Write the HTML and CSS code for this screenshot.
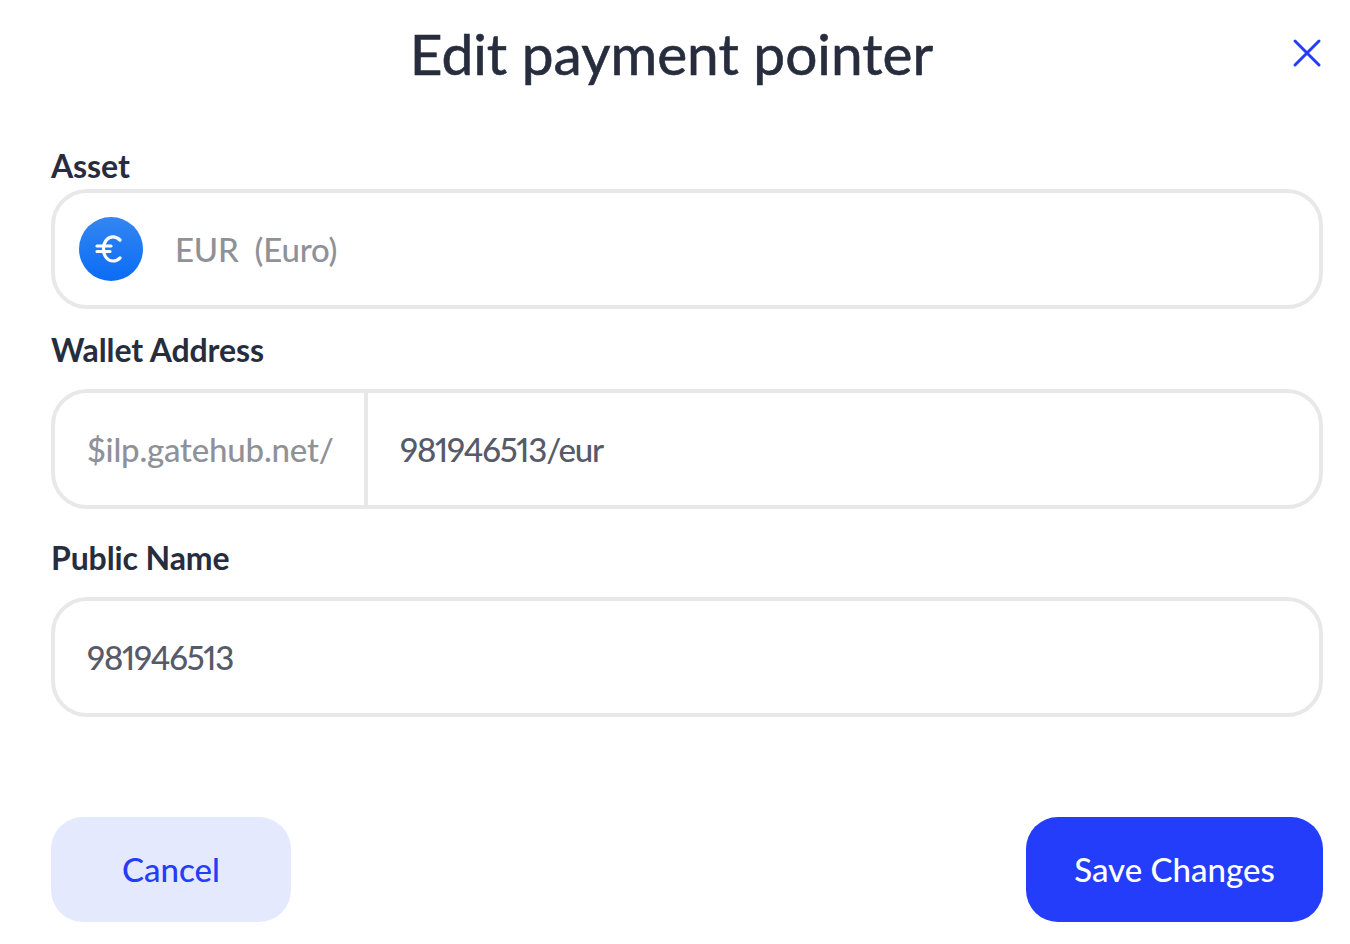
FILE: index.html
```html
<!DOCTYPE html>
<html lang="en">
<head>
    <meta charset="UTF-8">
    <meta name="viewport" content="width=device-width, initial-scale=1.0">
    <title>Edit payment pointer</title>
    <link rel="stylesheet" href="styles.css">
</head>
<body>
    <div class="modal">
        <div class="modal-header">
            <h1 class="modal-title">Edit payment pointer</h1>
            <button type="button" class="close-btn" aria-label="Close">
                <svg width="30" height="30" viewBox="0 0 30 30" fill="none" stroke="#233dfa" stroke-width="3" stroke-linecap="round">
                    <path d="M3 3L27 27M27 3L3 27"/>
                </svg>
            </button>
        </div>

        <form class="form">
            <div class="field field-asset">
                <div class="field-label">Asset</div>
                <div class="field-box">
                    <span class="coin">
                        <svg class="coin-icon" width="28" height="28" viewBox="0 0 28 28" fill="none" stroke="#fff" stroke-width="3.2" stroke-linecap="round">
                            <path d="M25 5C23 3 20.500 1.800 18 1.800C12.500 1.800 8.500 7 8.500 14C8.500 21 12.500 26 18 26C20.500 26 23 25 25 23"/>
                            <path d="M2 11H16M2 16.500H15"/>
                        </svg>
                    </span>
                    <span class="muted-text asset-code">EUR</span>
                    <span class="muted-text">(Euro)</span>
                </div>
            </div>

            <div class="field field-wallet">
                <div class="field-label label-spaced">Wallet Address</div>
                <div class="field-box field-box-split">
                    <div class="addon muted-text">$ilp.gatehub.net/</div>
                    <div class="value-text split-value">981946513/eur</div>
                </div>
            </div>

            <div class="field field-name">
                <div class="field-label label-spaced">Public Name</div>
                <div class="field-box field-box-plain">
                    <span class="value-text">981946513</span>
                </div>
            </div>

            <div class="actions">
                <button type="button" class="btn btn-cancel">Cancel</button>
                <button type="submit" class="btn btn-save">Save Changes</button>
            </div>
        </form>
    </div>
</body>
</html>
```

FILE: styles.css
```css
* {
    box-sizing: border-box;
}
body {
    margin: 0;
    background: #fff;
    font-family: Lato, "Open Sans", sans-serif;
    font-variant-numeric: proportional-nums;
    color: #272d3d;
}
.modal {
    width: 1350px;
    height: 944px;
    padding: 0 27px 22px 51px;
    overflow: hidden;
}
.modal-header {
    display: flex;
    align-items: center;
    height: 108px;
    padding-bottom: 3px;
}
.modal-title {
    flex: 1;
    margin: 0;
    font-size: 56.8px;
    font-weight: 400;
    text-align: center;
    -webkit-text-stroke: 0.6px #272d3d;
}
.close-btn {
    display: flex;
    width: 30px;
    height: 30px;
    margin-right: 1px;
    padding: 0;
    border: none;
    background: none;
    cursor: pointer;
}
.form {
    display: flex;
    flex-direction: column;
    padding-top: 35px;
}
.field-label {
    height: 46px;
    line-height: 46px;
    font-size: 32px;
    font-weight: 700;
    letter-spacing: -0.1px;
}
.label-spaced {
    margin-bottom: 16px;
}
.field-wallet {
    margin-top: 18px;
}
.field-name {
    margin-top: 26px;
}
.field-box {
    display: flex;
    align-items: center;
    height: 120px;
    padding-left: 24px;
    border: 4px solid #e8e8e9;
    border-radius: 36px;
    font-size: 33px;
    font-weight: 500;
}
.field-box-split {
    padding-left: 0;
}
.field-box-plain {
    padding-left: 32px;
}
.coin {
    display: flex;
    align-items: center;
    justify-content: center;
    width: 64px;
    height: 64px;
    margin-right: 32px;
    border-radius: 50%;
    background: linear-gradient(180deg, #3486f1 0%, #0a6cf5 100%);
}
.coin-icon {
    margin-right: 5px;
}
.muted-text {
    color: #8f9199;
    letter-spacing: -0.2px;
}
.asset-code {
    margin-right: 16px;
}
.value-text {
    color: #565a69;
    letter-spacing: -1.2px;
}
.addon {
    display: flex;
    align-items: center;
    width: 313px;
    height: 100%;
    padding-left: 32px;
    border-right: 4px solid #e8e8e9;
}
.split-value {
    padding-left: 32px;
}
.actions {
    display: flex;
    justify-content: space-between;
    margin-top: 100px;
}
.btn {
    height: 105px;
    padding-bottom: 2px;
    border: none;
    border-radius: 32px;
    font-family: inherit;
    font-size: 33px;
    font-weight: 500;
    cursor: pointer;
}
.btn-cancel {
    width: 240px;
    background: #e5e9fe;
    color: #233dfa;
}
.btn-save {
    width: 297px;
    background: #233dfa;
    color: #fff;
}
```
